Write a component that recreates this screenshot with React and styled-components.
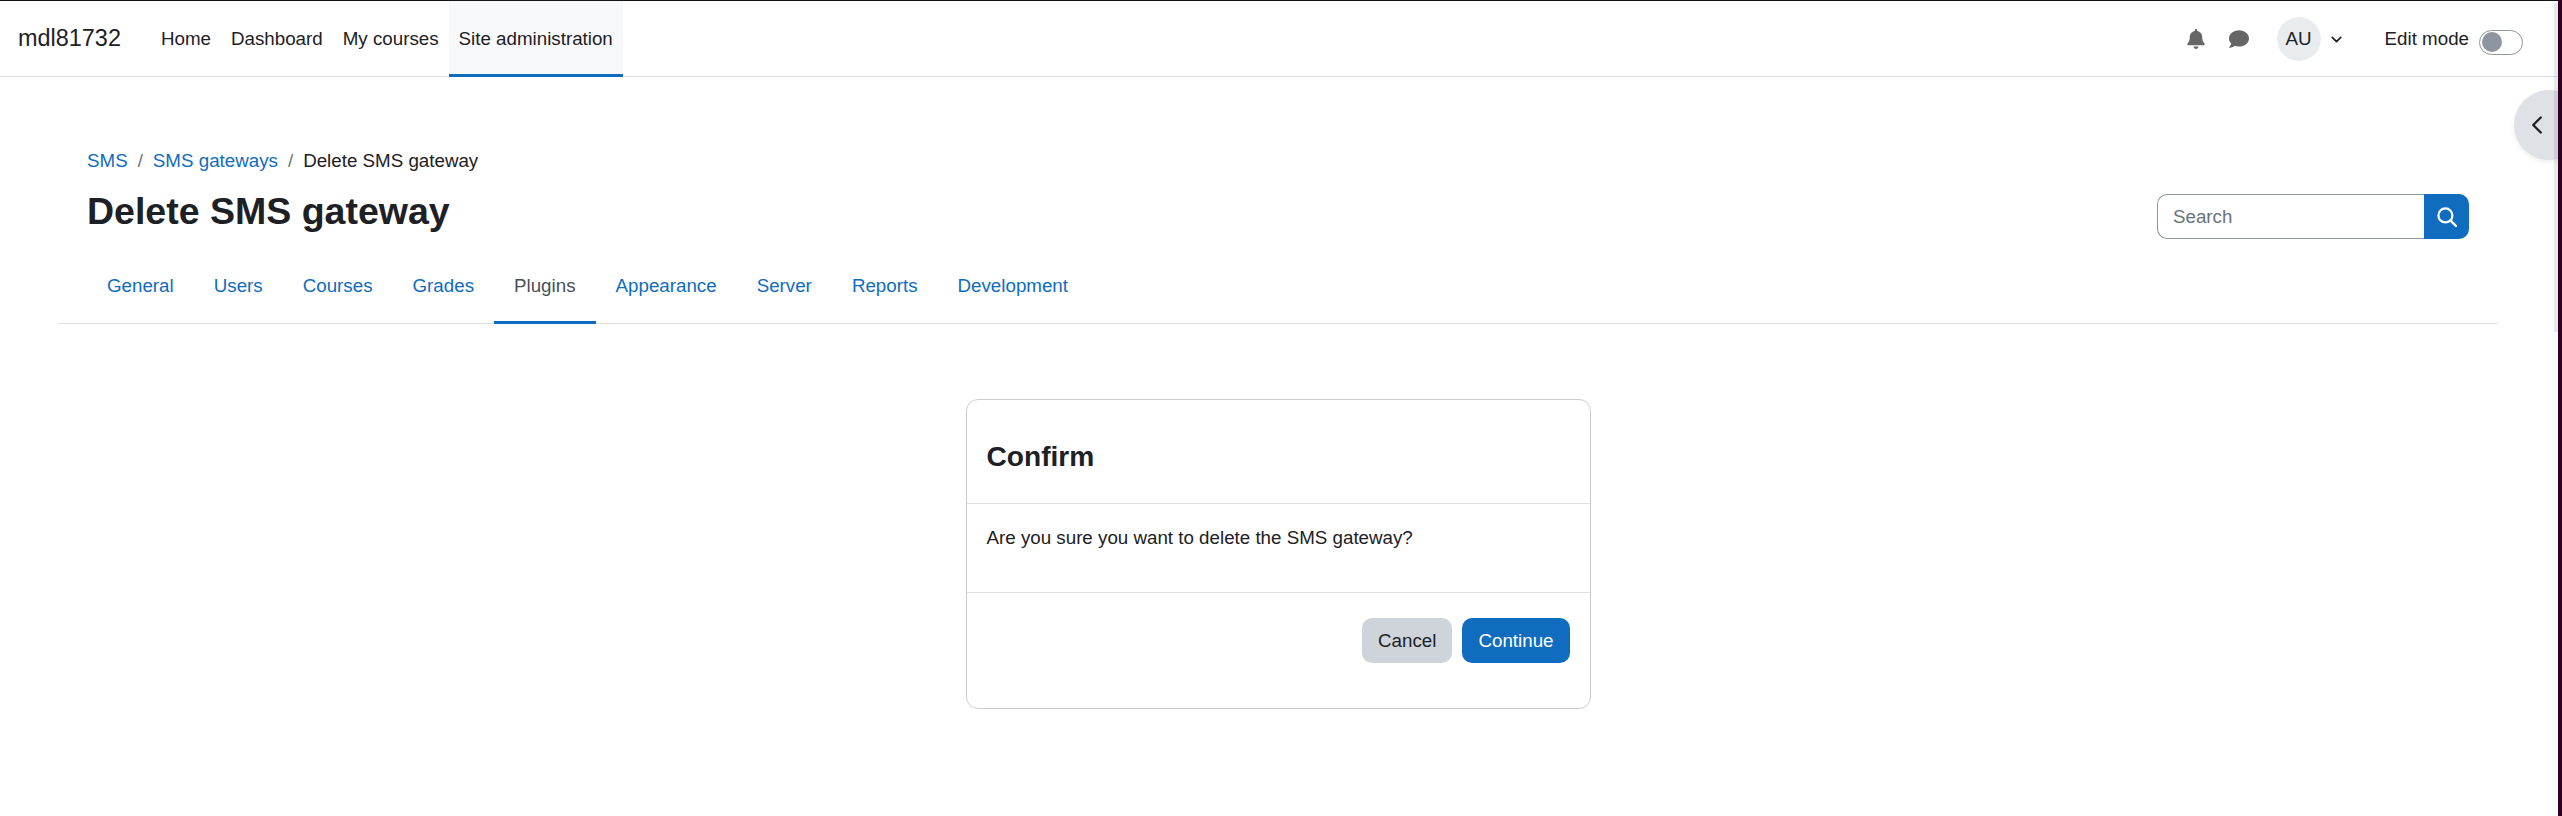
import React from 'react';
import styled, { createGlobalStyle } from 'styled-components';
import { FaBell, FaComment } from 'react-icons/fa';
import { ChevronDown, ChevronLeft } from 'lucide-react';

const GlobalStyle = createGlobalStyle`
  html, body {
    margin: 0;
    height: 100%;
    overflow: hidden;
    background: #2c001e;
  }
  body {
    font-family: "Liberation Sans", Arial, sans-serif;
    font-size: 18.75px;
    line-height: 1.5;
    color: #1d2125;
  }
  * {
    box-sizing: border-box;
  }
`;

const Screen = styled.div`
  display: flex;
  height: 816px;
  background: #2c001e;
`;

const Page = styled.div`
  position: relative;
  width: 2558px;
  height: 816px;
  overflow: hidden;
  background: #fff;
  border-top: 1px solid #16121a;
`;

const Navbar = styled.nav`
  display: flex;
  align-items: stretch;
  height: 76px;
  padding: 0 35px 0 18px;
  border-bottom: 1px solid #dee2e6;
`;

const Brand = styled.a`
  align-self: center;
  margin-top: 1px;
  margin-right: 30px;
  font-size: 23.44px;
  color: #1d2125;
  text-decoration: none;
`;

const NavList = styled.div`
  display: flex;
`;

const NavLink = styled.a`
  display: flex;
  align-items: center;
  padding: 4px 10px 0;
  color: #1d2125;
  text-decoration: none;
  background: ${p => (p.$active ? '#f8f9fa' : 'transparent')};
  border-bottom: 3px solid ${p => (p.$active ? '#0f6cbf' : 'transparent')};
  margin-bottom: -1px;
`;

const NavRight = styled.div`
  display: flex;
  align-items: center;
  margin-left: auto;
  padding-top: 1px;
`;

const IconLink = styled.a`
  display: flex;
  align-items: center;
  justify-content: center;
  width: 43px;
  color: #666;
`;

const UserMenu = styled.div`
  display: flex;
  align-items: center;
  gap: 7px;
  margin-left: 16px;
  margin-right: 40px;
`;

const Avatar = styled.span`
  display: flex;
  align-items: center;
  justify-content: center;
  width: 44px;
  height: 44px;
  border-radius: 50%;
  background: #e9ecef;
`;

const EditMode = styled.label`
  display: flex;
  align-items: center;
  gap: 10px;
`;

const Switch = styled.span`
  display: flex;
  align-items: center;
  width: 44px;
  height: 25px;
  margin-top: 6px;
  padding: 0 2px;
  border: 1px solid #8f959e;
  border-radius: 13px;
`;

const SwitchKnob = styled.span`
  width: 20px;
  height: 20px;
  border-radius: 50%;
  background: #8f959e;
`;

const DrawerToggle = styled.button`
  position: absolute;
  top: 89px;
  right: -26px;
  display: flex;
  align-items: center;
  width: 70px;
  height: 70px;
  padding: 0 0 0 8px;
  border: 0;
  border-radius: 50%;
  background: #dee2e6;
  box-shadow: 0 2px 5px rgba(0, 0, 0, 0.08);
  color: #1d2125;
`;

const ScrollThumb = styled.div`
  position: absolute;
  top: 2px;
  right: 0;
  width: 4px;
  height: 329px;
  background: rgba(0, 0, 0, 0.09);
`;

const Main = styled.main`
  padding: 0 60px 0 58px;
`;

const PageHeader = styled.header`
  display: flex;
  justify-content: space-between;
  padding: 70px 29px 0;
`;

const TitleBlock = styled.div`
  display: flex;
  flex-direction: column;
`;

const Breadcrumb = styled.ol`
  display: flex;
  margin: 0 0 14px;
  padding: 0;
  list-style: none;
`;

const Crumb = styled.li`
  a {
    color: #0f6cbf;
    text-decoration: none;
  }
`;

const CrumbSeparator = styled.li`
  padding: 0 10px;
  color: #6a737b;
`;

const Title = styled.h1`
  margin: 0;
  font-size: 37.5px;
  line-height: 45px;
  font-weight: 700;
`;

const SearchForm = styled.form`
  display: flex;
  align-self: flex-end;
  width: 312px;
  height: 45px;
  margin-bottom: -5px;
`;

const SearchInput = styled.input`
  flex: 1;
  min-width: 0;
  padding: 0 15px;
  border: 1px solid #8f959e;
  border-right: 0;
  border-radius: 10px 0 0 10px;
  font: inherit;
  color: #1d2125;

  &::placeholder {
    color: #6a737b;
    opacity: 1;
  }
`;

const SearchButton = styled.button`
  display: flex;
  align-items: center;
  justify-content: center;
  width: 45px;
  padding: 0;
  border: 0;
  border-radius: 0 10px 10px 0;
  background: #0f6cbf;
  color: #fff;
`;

const Tabs = styled.div`
  display: flex;
  margin-top: 14px;
  padding: 0 29px;
  border-bottom: 1px solid #dee2e6;
`;

const Tab = styled.a`
  margin-bottom: -1px;
  padding: 24px 20px 21px;
  color: ${p => (p.$active ? '#495057' : '#0f6cbf')};
  text-decoration: none;
  border-bottom: 3px solid ${p => (p.$active ? '#0f6cbf' : 'transparent')};
`;

const Card = styled.section`
  width: 625px;
  margin: 75px auto 0;
  border: 1px solid #ccc;
  border-radius: 12px;
  background: #fff;
`;

const CardHeader = styled.div`
  padding: 40px 20px 29px;
  border-bottom: 1px solid #dee2e6;
`;

const CardTitle = styled.h4`
  margin: 0;
  font-size: 28.125px;
  line-height: 34px;
  font-weight: 700;
`;

const CardBody = styled.div`
  padding: 20px 20px 40px;
  border-bottom: 1px solid #dee2e6;
`;

const CardText = styled.p`
  margin: 0;
`;

const CardFooter = styled.div`
  display: flex;
  justify-content: flex-end;
  gap: 10px;
  padding: 25px 20px 45px;
`;

const Button = styled.button`
  height: 45px;
  padding: 0 16px;
  border: 0;
  border-radius: 10px;
  font: inherit;
  background: ${p => (p.$primary ? '#0f6cbf' : '#ced4da')};
  color: ${p => (p.$primary ? '#fff' : '#1d2125')};
`;

const navItems = ['Home', 'Dashboard', 'My courses', 'Site administration'];
const tabItems = ['General', 'Users', 'Courses', 'Grades', 'Plugins', 'Appearance', 'Server', 'Reports', 'Development'];

const SearchIcon = () => (
  <svg width="20" height="20" viewBox="0 0 20 20" fill="none" stroke="currentColor">
    <circle cx="8.4" cy="8.4" r="7" strokeWidth="2.2" />
    <path d="M13.6 13.6 19 19" strokeWidth="2.4" strokeLinecap="round" />
  </svg>
);

export default function App() {
  return (
    <Screen>
      <GlobalStyle />
      <Page>
        <Navbar>
          <Brand>mdl81732</Brand>
          <NavList>
            {navItems.map(item => (
              <NavLink key={item} $active={item === 'Site administration'}>{item}</NavLink>
            ))}
          </NavList>
          <NavRight>
            <IconLink><FaBell size={20} /></IconLink>
            <IconLink><FaComment size={20} /></IconLink>
            <UserMenu>
              <Avatar>AU</Avatar>
              <ChevronDown size={17} strokeWidth={2.4} />
            </UserMenu>
            <EditMode>
              Edit mode
              <Switch><SwitchKnob /></Switch>
            </EditMode>
          </NavRight>
        </Navbar>
        <Main>
          <PageHeader>
            <TitleBlock>
              <Breadcrumb>
                <Crumb><a>SMS</a></Crumb>
                <CrumbSeparator>/</CrumbSeparator>
                <Crumb><a>SMS gateways</a></Crumb>
                <CrumbSeparator>/</CrumbSeparator>
                <Crumb>Delete SMS gateway</Crumb>
              </Breadcrumb>
              <Title>Delete SMS gateway</Title>
            </TitleBlock>
            <SearchForm>
              <SearchInput placeholder="Search" />
              <SearchButton type="button"><SearchIcon /></SearchButton>
            </SearchForm>
          </PageHeader>
          <Tabs>
            {tabItems.map(item => (
              <Tab key={item} $active={item === 'Plugins'}>{item}</Tab>
            ))}
          </Tabs>
          <Card>
            <CardHeader>
              <CardTitle>Confirm</CardTitle>
            </CardHeader>
            <CardBody>
              <CardText>Are you sure you want to delete the SMS gateway?</CardText>
            </CardBody>
            <CardFooter>
              <Button type="button">Cancel</Button>
              <Button type="button" $primary>Continue</Button>
            </CardFooter>
          </Card>
        </Main>
        <DrawerToggle type="button"><ChevronLeft size={30} strokeWidth={1.9} /></DrawerToggle>
        <ScrollThumb />
      </Page>
    </Screen>
  );
}
